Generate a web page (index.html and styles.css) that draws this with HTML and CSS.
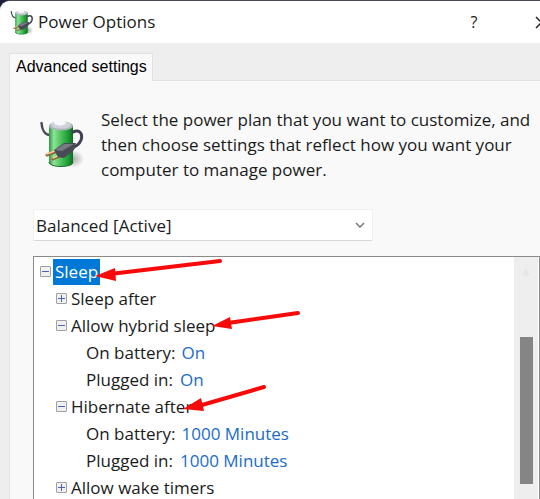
FILE: index.html
```html
<!DOCTYPE html>
<html lang="en">
<head>
    <meta charset="UTF-8">
    <meta name="viewport" content="width=device-width, initial-scale=1.0">
    <title>Power Options</title>
    <link rel="stylesheet" href="styles.css">
</head>
<body>

<!-- shared drawings -->
<svg class="defs" width="0" height="0" aria-hidden="true">
    <defs>
        <linearGradient id="green" x1="0" x2="1" y1="0" y2="0">
            <stop offset="0" stop-color="#2f9440"/>
            <stop offset="0.2" stop-color="#8fe29a"/>
            <stop offset="0.5" stop-color="#4cc25a"/>
            <stop offset="0.8" stop-color="#1f9a35"/>
            <stop offset="1" stop-color="#0d6b22"/>
        </linearGradient>
        <radialGradient id="shade">
            <stop offset="0" stop-color="#8a8a8a" stop-opacity="0.7"/>
            <stop offset="1" stop-color="#8a8a8a" stop-opacity="0"/>
        </radialGradient>
        <symbol id="battery" viewBox="0 0 44 48">
            <ellipse cx="33" cy="39" rx="11" ry="9" fill="url(#shade)"/>
            <path d="M1.500 3C2 10 5 15 10 15" fill="none" stroke="#4a4c5c" stroke-width="2.5" stroke-linecap="round"/>
            <path d="M9 5V42C9 48 33 48 33 42V5Z" fill="url(#green)"/>
            <path d="M9 42C9 48 33 48 33 42" fill="none" stroke="#136b26" stroke-width="1"/>
            <ellipse cx="21" cy="6" rx="12" ry="4.5" fill="#a9b6b4"/>
            <ellipse cx="21" cy="5" rx="10" ry="3.8" fill="#cdd2dc"/>
            <ellipse cx="20" cy="3" rx="6" ry="2.600" fill="#f7f8fc"/>
            <path d="M33 12C40 9 43 14 41 20C39 25 36 27 31 28" fill="none" stroke="#3f4150" stroke-width="3" stroke-linecap="round"/>
            <path d="M7 35L17 31M13 39L22 35" stroke="#8b6335" stroke-width="3" stroke-linecap="round"/>
            <path d="M7 34L17 30M13 38L22 34" stroke="#f2cf96" stroke-width="1.5" stroke-linecap="round"/>
            <path d="M14 30L24 23L36 23L34 30L24 38L18 37Z" fill="#484a55"/>
            <path d="M15 30L24 24L34 24L22 31Z" fill="#777984"/>
        </symbol>
    </defs>
</svg>

<div class="window">
    <header class="titlebar">
        <svg class="titlebar-icon" aria-hidden="true"><use href="#battery"/></svg>
        <h1>Power Options</h1>
        <button class="help" type="button" aria-label="Help">?</button>
        <button class="close" type="button" aria-label="Close">
            <svg width="13" height="13" viewBox="0 0 13 13"><path d="M1 1L12 12M12 1L1 12"/></svg>
        </button>
    </header>

    <nav class="tabs">
        <button class="tab" type="button">Advanced settings</button>
    </nav>

    <main class="panel">
        <div class="intro">
            <svg class="intro-icon" aria-hidden="true"><use href="#battery"/></svg>
            <p>Select the power plan that you want to customize, and then choose settings that reflect how you want your computer to manage power.</p>
        </div>

        <div class="plan">
            <select class="plan-select" aria-label="Power plan">
                <option>Balanced [Active]</option>
            </select>
            <svg class="plan-chevron" width="10" height="6" viewBox="0 0 10 6" aria-hidden="true"><path d="M1 1L5 5L9 1"/></svg>
        </div>

        <!-- settings tree -->
        <div class="tree">
            <ul class="tree-list">
                <li class="row"><button class="toggle" type="button" aria-label="Collapse Sleep"></button><span class="label selected">Sleep</span></li>
                <li class="row child"><button class="toggle plus" type="button" aria-label="Expand Sleep after"></button><span class="label">Sleep after</span></li>
                <li class="row child"><button class="toggle" type="button" aria-label="Collapse Allow hybrid sleep"></button><span class="label">Allow hybrid sleep</span></li>
                <li class="row leaf"><span class="name">On battery:</span><a class="value" href="#">On</a></li>
                <li class="row leaf"><span class="name">Plugged in:</span><a class="value" href="#">On</a></li>
                <li class="row child"><button class="toggle" type="button" aria-label="Collapse Hibernate after"></button><span class="label">Hibernate after</span></li>
                <li class="row leaf"><span class="name">On battery:</span><a class="value" href="#">1000 Minutes</a></li>
                <li class="row leaf"><span class="name">Plugged in:</span><a class="value" href="#">1000 Minutes</a></li>
                <li class="row child"><button class="toggle plus" type="button" aria-label="Expand Allow wake timers"></button><span class="label">Allow wake timers</span></li>
            </ul>
            <div class="scrollbar">
                <svg class="scroll-up" width="8" height="8" viewBox="0 0 8 8" aria-hidden="true"><path d="M4 0L8 8H0Z"/></svg>
                <div class="thumb"></div>
            </div>

            <!-- red arrows over the tree -->
            <svg class="arrows" width="280" height="170" viewBox="0 0 280 170" aria-hidden="true">
                <path class="shaft" d="M186 4L76 17M264 56L194 66M230 130L168 148"/>
                <path class="head" d="M61 19L81 11L82 24ZM178 69L196 60L198 72ZM149 152L167 141L170 154Z"/>
            </svg>
        </div>
    </main>
</div>

</body>
</html>
```
FILE: styles.css
```css
* {
    box-sizing: border-box;
}
body {
    margin: 0;
    overflow: hidden;
    background-color: #1d1d3d;
    font-family: "Open Sans", "Noto Sans", sans-serif;
    font-size: 17px;
    color: #1b1b1b;
}
button, select {
    font: inherit;
    color: inherit;
    margin: 0;
    padding: 0;
    border: none;
    background: none;
}
.defs {
    position: absolute;
}
.window {
    display: flex;
    flex-direction: column;
    height: 100vh;
    overflow: hidden;
    border-top: 1px solid #4a4a55;
    border-radius: 10px 0 0 0;
    background-color: #eee;
}
.titlebar {
    display: flex;
    flex: none;
    align-items: center;
    height: 42px;
    padding-left: 10px;
    overflow: hidden;
    background-color: #fff;
}
.titlebar-icon {
    width: 24px;
    height: 25px;
}
h1 {
    flex: 1;
    margin: 0 0 0 4px;
    font-size: 17px;
    font-weight: 400;
    line-height: 22px;
}
.help {
    width: 40px;
    font-size: 16px;
}
.close {
    display: flex;
    justify-content: flex-end;
    width: 54px;
    margin-right: -8px;
}
.close path {
    stroke: #222;
    stroke-width: 1.5;
}
.tabs {
    flex: none;
    padding: 10px 0 0 9px;
}
.tab {
    display: block;
    position: relative;
    height: 28px;
    margin-bottom: -1px;
    padding: 0 5px 2px 6px;
    border: 1px solid #e2e2e2;
    border-bottom: none;
    background-color: #f9f9f9;
    font-family: "Liberation Sans", Arial, sans-serif;
    font-size: 16px;
    color: #000;
}
.panel {
    display: flex;
    flex: 1;
    flex-direction: column;
    min-height: 0;
    margin-left: 9px;
    padding: 26px 0 0 23px;
    border-top: 1px solid #e2e2e2;
    border-left: 1px solid #e2e2e2;
    background-color: #f9f9f9;
}
.intro {
    display: flex;
    gap: 17px;
    padding-left: 7px;
}
.intro-icon {
    flex: none;
    width: 44px;
    height: 48px;
    margin-top: 13px;
}
.intro p {
    margin: 0;
    line-height: 25px;
}
.plan {
    position: relative;
    width: 340px;
    margin: 27px 0 15px;
}
.plan-select {
    display: block;
    width: 100%;
    height: 32px;
    padding: 0 2px;
    appearance: none;
    border: 1px solid #f0f0f0;
    border-bottom-color: #d8d8d8;
    border-radius: 2px;
    background-color: #fff;
}
.plan-chevron {
    position: absolute;
    top: 13px;
    right: 8px;
    fill: none;
    stroke: #777;
    stroke-width: 1.5;
}
.tree {
    display: flex;
    flex: 1;
    position: relative;
    min-height: 0;
    border: 1px solid #8a8a8a;
    border-bottom: none;
    background-color: #fff;
}
.tree-list {
    flex: 1;
    margin: 0;
    padding: 1px 0 0 6px;
    list-style: none;
}
.row {
    display: flex;
    align-items: center;
    height: 27px;
    white-space: nowrap;
}
.child {
    padding-left: 16px;
}
.leaf {
    gap: 6px;
    padding-left: 46px;
}
.name {
    min-width: 88px;
}
.label {
    padding: 0 2px;
    margin-left: 2px;
    line-height: 26px;
}
.selected {
    background-color: #0078d7;
    color: #fff;
}
.value {
    color: #1a6cc8;
    text-decoration: none;
}
.toggle {
    flex: none;
    width: 11px;
    height: 11px;
    border: 1px solid #a0a0a0;
    border-radius: 1px;
    background: linear-gradient(#4b63b5, #4b63b5) center / 7px 1px no-repeat, #f0f0f0;
}
.plus {
    background: linear-gradient(#4b63b5, #4b63b5) center / 7px 1px no-repeat, linear-gradient(#4b63b5, #4b63b5) center / 1px 7px no-repeat, #f0f0f0;
}
.scrollbar {
    display: flex;
    flex-direction: column;
    align-items: center;
    width: 24px;
    margin-right: 1px;
    padding: 11px 0 15px;
    background-color: #eee;
}
.scroll-up {
    flex: none;
    fill: #e6e6e6;
}
.thumb {
    flex: 1;
    width: 13px;
    margin-top: 61px;
    background-color: #858585;
}
.arrows {
    position: absolute;
    top: 0;
    left: 0;
    pointer-events: none;
}
.shaft {
    stroke: #f80a0a;
    stroke-width: 4;
    stroke-linecap: round;
}
.head {
    fill: #f80a0a;
}
```
